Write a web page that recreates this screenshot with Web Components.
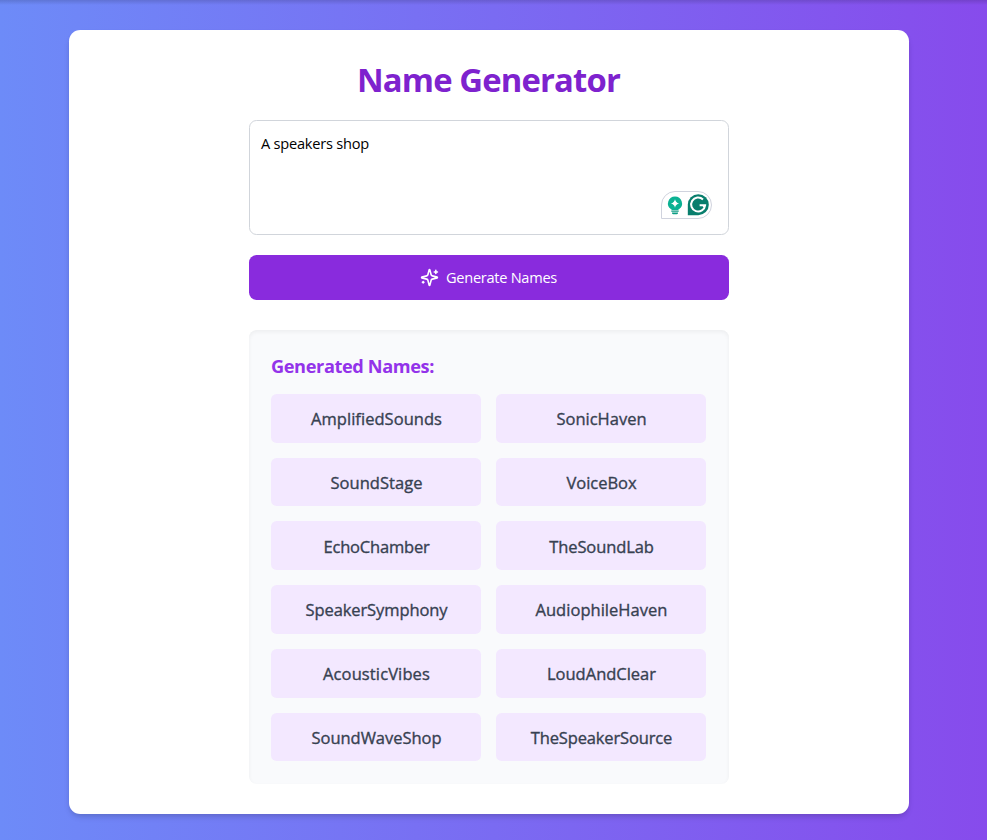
<!DOCTYPE html>
<html lang="en"><head><meta charset="utf-8"><title>Name Generator</title>
<style>
html,body{margin:0;height:840px;overflow:hidden}
body{font-family:"Open Sans","Noto Sans",sans-serif;font-size:15px}
</style></head><body>
<name-app></name-app>
<script>
const define=(tag,html,init)=>customElements.define(tag,class extends HTMLElement{
  constructor(){super();this.attachShadow({mode:'open'}).innerHTML=html;}
  connectedCallback(){if(init)init(this);}
});
// Text run whose tracking is adjusted so it fills the width given by "w".
define('fit-text','<style>:host{display:inline-block;white-space:nowrap}</style><slot></slot>',el=>{
  const w=+el.getAttribute('w'),n=el.textContent.length;
  const d=(w-el.getBoundingClientRect().width)/n;
  el.style.letterSpacing=d.toFixed(3)+'px';
});
define('assistant-badge',`<style>:host{display:flex;align-items:center;box-sizing:border-box;width:51px;height:28px;border:1px solid #d0d3de;border-radius:14px 14px 14px 0;background:#fff}svg{display:block;flex:none}</style>
<svg width="50" height="26" viewBox="0 0 50 26"><path d="M13 4.5a7 7 0 0 0-4.2 12.6l1.2 1h6l1.2-1A7 7 0 0 0 13 4.5Z" fill="#0bb193"/><path d="M9.3 18.5h7.4v1.3H9.3zM10 20.5h6v.5q0 1.2-1.4 1.2h-3.2Q10 22.2 10 21z" fill="#0b9c84"/><path d="M13 7.300q.7 3.500 4.100 4.200-3.400.7-4.100 4.200-.7-3.500-4.100-4.200Q12.300 10.800 13 7.300Z" fill="#fff"/><path d="M36.300 2.200A10.500 10.500 0 1 1 36.300 23.200H25.800V12.700A10.500 10.500 0 0 1 36.300 2.200Z" fill="#087e6d"/><path d="M41 7.500A7 7 0 1 0 43.100 13.300H37.600M43.100 13.300L41.500 15.400" fill="none" stroke="#fff" stroke-width="2"/></svg>`);
define('prompt-box',`<style>:host{display:block;box-sizing:border-box;position:relative;height:115px;border:1px solid #d1d5db;border-radius:7.5px;background:#fff;padding:11px 11px;color:#000;font-size:14.600px;line-height:22px}assistant-badge{position:absolute;right:16px;bottom:15px}</style><slot></slot><assistant-badge></assistant-badge>`);
define('generate-button',`<style>:host{display:flex;box-sizing:border-box;height:45px;margin-top:20px;border-radius:7.5px;background:#892bdd;color:#fff;align-items:center;padding-left:171px;gap:7px;font-size:14.600px;line-height:22px}svg{display:block}::slotted(*){margin-bottom:2px}</style>
<svg width="19" height="19" viewBox="0 0 24 24" fill="none" stroke="#fff" stroke-width="2" stroke-linecap="round" stroke-linejoin="round"><path d="M9.937 15.5A2 2 0 0 0 8.5 14.063l-6.135-1.582a.5.5 0 0 1 0-.962L8.5 9.936A2 2 0 0 0 9.937 8.5l1.582-6.135a.5.5 0 0 1 .963 0L14.063 8.5A2 2 0 0 0 15.5 9.937l6.135 1.581a.5.5 0 0 1 0 .964L15.5 14.063a2 2 0 0 0-1.437 1.437l-1.582 6.135a.5.5 0 0 1-.963 0z"/><path d="M20 3v4M22 5h-4M4 17v2M5 18H3"/></svg><slot></slot>`);
define('name-chip',`<style>:host{display:flex;align-items:center;justify-content:center;box-sizing:border-box;padding:2px 0 0 1px;height:48.750px;border-radius:5.600px;background:#f3e8ff;color:#374151;font-size:16.500px;line-height:26px;font-weight:500;-webkit-text-stroke:.35px #374151}</style><slot></slot>`);
define('name-results',`<style>:host{display:block;box-sizing:border-box;height:453.750px;margin-top:30px;border-radius:7.500px;background:#f9fafc;box-shadow:inset 0 2px 4px rgba(0,0,0,.05);padding:22.500px 23px 22.500px 22px}h2{margin:0 0 15px;font-size:18.200px;line-height:27px;height:26.250px;color:#9333ea;font-weight:700}div{display:grid;grid-template-columns:1fr 1fr;gap:15px}</style><h2><slot name="title"></slot></h2><div><slot></slot></div>`);
define('name-app',`<style>
:host{display:block;box-sizing:border-box;height:840px;padding:30px 78px 0 69px;background:linear-gradient(to right,#6d8bf8,#874bec)}
:host::before{content:"";position:absolute;left:0;right:0;top:0;height:5px;background:linear-gradient(rgba(0,0,0,.14),transparent)}
main{box-sizing:border-box;height:784px;background:#fff;border-radius:11.250px;padding:30px 180px;box-shadow:0 4px 6px -1px rgba(0,0,0,.12),0 2px 4px -1px rgba(0,0,0,.08)}
h1{margin:0 1px 22px 0;height:38px;line-height:39px;text-align:center;font-size:32.800px;font-weight:700;color:#7e22ce}
</style><main><h1><fit-text w="263">Name Generator</fit-text></h1>
<prompt-box><fit-text w="108">A speakers shop</fit-text></prompt-box>
<generate-button><fit-text w="111">Generate Names</fit-text></generate-button>
<name-results><fit-text slot="title" w="163">Generated Names:</fit-text>
${[['AmplifiedSounds',131],['SonicHaven',90],['SoundStage',92],['VoiceBox',70],['EchoChamber',106],['TheSoundLab',104.500],['SpeakerSymphony',142],['AudiophileHaven',132],['AcousticVibes',107],['LoudAndClear',109],['SoundWaveShop',130],['TheSpeakerSource',141.500]].map(([t,w])=>`<name-chip><fit-text w="${w}">${t}</fit-text></name-chip>`).join('')}
</name-results></main>`);
</script></body></html>
